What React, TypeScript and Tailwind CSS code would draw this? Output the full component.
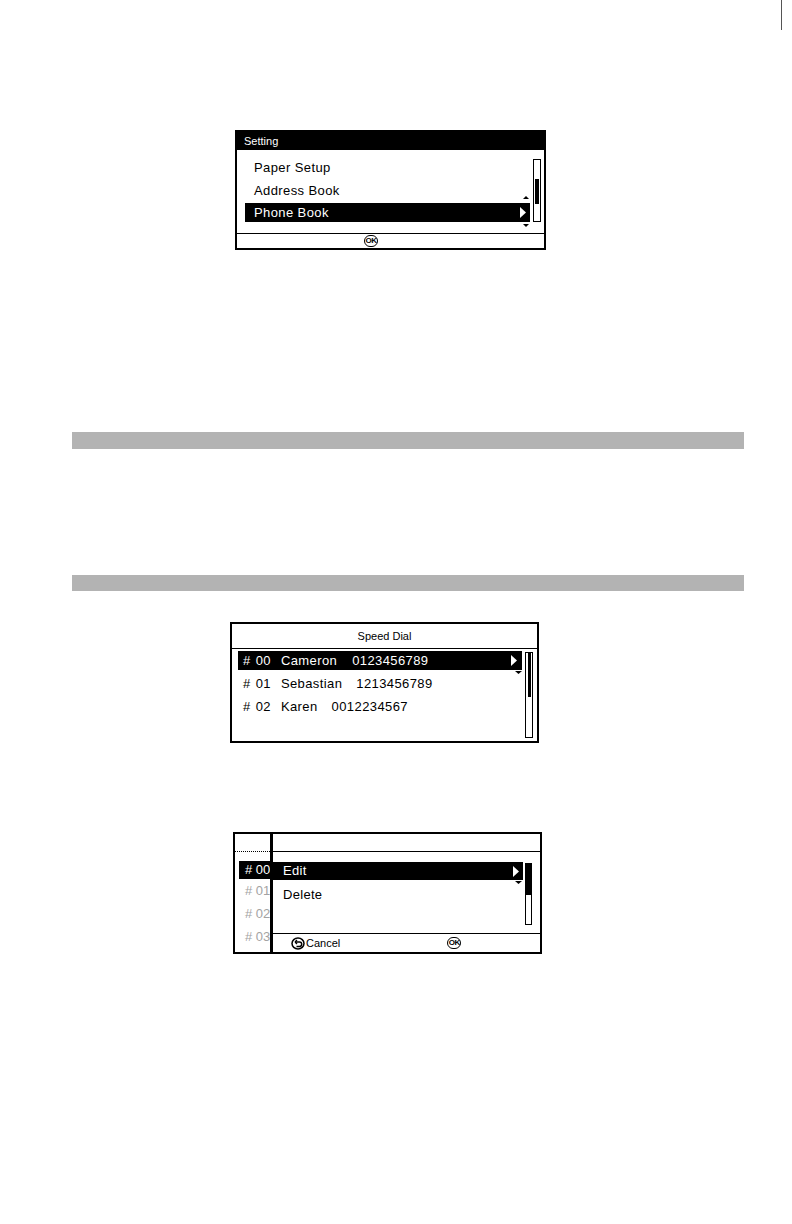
import React from 'react';

const font = { fontFamily: '"Liberation Sans", Arial, sans-serif' };

function RightTri({ className = '' }: { className?: string }) {
  return (
    <svg width="6" height="11" viewBox="0 0 6 11" className={className}>
      <polygon points="0,0 6,5.5 0,11" fill="white" />
    </svg>
  );
}

function UpTri() {
  return (
    <svg width="6" height="3" viewBox="0 0 6 3">
      <polygon points="0,3 3,0 6,3" fill="black" />
    </svg>
  );
}

function DownTri({ w = 6 }: { w?: number }) {
  return (
    <svg width={w} height="3" viewBox={`0 0 ${w} 3`}>
      <polygon points={`0,0 ${w},0 ${w / 2},3`} fill="black" />
    </svg>
  );
}

function OkIcon() {
  return (
    <span className="flex h-[12px] w-[14px] items-center justify-center rounded-full border-[1.5px] border-black text-[8px] font-bold leading-none tracking-[-0.5px] text-black">
      OK
    </span>
  );
}

function BackIcon() {
  return (
    <svg width="14" height="13" viewBox="0 0 14 13">
      <ellipse cx="7" cy="6.5" rx="6" ry="5.5" fill="none" stroke="black" strokeWidth="1.5" />
      <path d="M4 5 H8.5 A2.2 2.2 0 0 1 8.5 9.4 H5.5" fill="none" stroke="black" strokeWidth="1.5" />
      <path d="M4 5 L6 3 M4 5 L6 7" fill="none" stroke="black" strokeWidth="1.3" />
    </svg>
  );
}

function SettingScreen() {
  return (
    <div className="ml-[235px] w-[311px] h-[120px] border-2 border-black flex flex-col">
      <div className="h-[18px] bg-black text-white text-[11px] leading-[18px] pl-[7px]">Setting</div>
      {/* list body */}
      <div className="h-[83px] flex pl-[8px] pt-[8px]">
        <div className="w-[285px] flex flex-col text-[13px] tracking-[0.4px]">
          <div className="h-[19px] flex items-center pl-[9px]">Paper Setup</div>
          <div className="h-[19px] mt-[4px] flex items-end justify-between pl-[9px] pr-[1px]">
            <span className="self-center">Address Book</span>
            <span className="mb-[1px]"><UpTri /></span>
          </div>
          <div className="h-[19px] mt-[3px] bg-black text-white flex items-center justify-between pl-[9px] pr-[4px]">
            <span>Phone Book</span>
            <RightTri />
          </div>
          <div className="flex justify-end pr-[1px] mt-[2px]">
            <DownTri />
          </div>
        </div>
        <div className="ml-[3px] mt-[1px] w-[8px] h-[63px] border border-black pt-[19px] pl-[1px]">
          <div className="w-[4px] h-[25px] bg-black" />
        </div>
      </div>
      <div className="border-t border-black h-[15px] flex items-center pl-[127px]">
        <OkIcon />
      </div>
    </div>
  );
}

const speedRows = [
  { id: '01', name: 'Sebastian', num: '1213456789' },
  { id: '02', name: 'Karen', num: '0012234567' },
];

function SpeedDialScreen() {
  return (
    <div className="ml-[230px] w-[309px] h-[121px] border-2 border-black flex flex-col">
      <div className="h-[25px] border-b border-black text-[11px] flex items-center justify-center">Speed Dial</div>
      <div className="flex pl-[6px] pt-[2px]">
        <div className="w-[284px] flex flex-col text-[13px] tracking-[0.4px]">
          <div className="h-[19px] bg-black text-white flex items-center justify-between pl-[5px] pr-[5px]">
            <span className="flex">
              <span>#</span>
              <span className="ml-[5px]">00</span>
              <span className="ml-[10px]">Cameron</span>
              <span className="ml-[15px]">0123456789</span>
            </span>
            <RightTri />
          </div>
          <div className="h-[4px] flex justify-end pt-[1px]">
            <DownTri w={7} />
          </div>
          {speedRows.map((r, i) => (
            <div key={r.id} className={`h-[19px] flex items-center pl-[5px] ${i > 0 ? 'mt-[4px]' : ''}`}>
              <span>#</span>
              <span className="ml-[5px]">{r.id}</span>
              <span className="ml-[10px]">{r.name}</span>
              <span className="ml-[14px]">{r.num}</span>
            </div>
          ))}
        </div>
        <div className="ml-[3px] mt-[1px] w-[8px] h-[86px] border border-black pl-[2px]">
          <div className="w-[3px] h-[44px] bg-black" />
        </div>
      </div>
    </div>
  );
}

function EditScreen() {
  return (
    <div className="ml-[233px] w-[309px] h-[122px] border-2 border-black flex">
      {/* background list, partly covered */}
      <div className="w-[35px] overflow-hidden flex flex-col text-[13px] whitespace-nowrap">
        <div className="h-[18px] border-b border-dotted border-black" />
        <div className="pl-[4px] pt-[9px]">
          <div className="h-[18px] bg-black text-white flex items-center pl-[6px]"># 00</div>
          <div className="h-[23px] flex items-center pl-[6px] text-[#a3a3a3]"># 01</div>
          <div className="h-[23px] flex items-center pl-[6px] text-[#a3a3a3]"># 02</div>
          <div className="h-[23px] flex items-center pl-[6px] text-[#a3a3a3]"># 03</div>
        </div>
      </div>
      <div className="w-[3px] bg-black" />
      {/* popup */}
      <div className="flex-1 flex flex-col">
        <div className="h-[18px] border-b border-black" />
        <div className="h-[81px] flex pt-[10px]">
          <div className="w-[250px] flex flex-col text-[13px] tracking-[0.3px]">
            <div className="h-[18px] bg-black text-white flex items-center justify-between pl-[10px] pr-[4px]">
              <span>Edit</span>
              <RightTri />
            </div>
            <div className="h-[5px] flex justify-end pr-[1px] pt-[1px]">
              <DownTri w={7} />
            </div>
            <div className="h-[19px] flex items-center pl-[10px]">Delete</div>
          </div>
          <div className="ml-[2px] mt-[1px] w-[7px] h-[62px] border border-black">
            <div className="w-full h-[31px] bg-black" />
          </div>
        </div>
        <div className="border-t border-black flex-1 flex items-center text-[11px]">
          <span className="ml-[18px]"><BackIcon /></span>
          <span className="ml-[1px]">Cancel</span>
          <span className="ml-[107px]"><OkIcon /></span>
        </div>
      </div>
    </div>
  );
}

export default function App() {
  return (
    <div className="w-[792px] h-[1224px] bg-white text-black overflow-hidden flex flex-col" style={font}>
      <div className="h-[30px] flex justify-end pr-[10px]">
        <div className="w-px h-full bg-[#555]" />
      </div>
      <div className="mt-[100px]">
        <SettingScreen />
      </div>
      <div className="mt-[182px] ml-[72px] w-[672px] h-[17px] bg-[#b3b3b3]" />
      <div className="mt-[126px] ml-[72px] w-[672px] h-[16px] bg-[#b3b3b3]" />
      <div className="mt-[31px]">
        <SpeedDialScreen />
      </div>
      <div className="mt-[89px]">
        <EditScreen />
      </div>
    </div>
  );
}
